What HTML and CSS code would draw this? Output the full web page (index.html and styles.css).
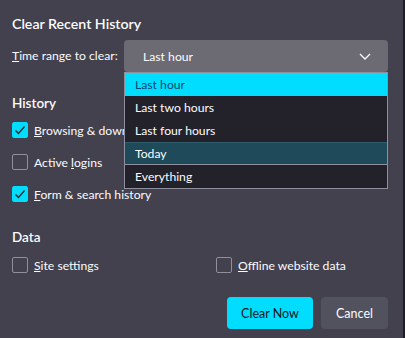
FILE: index.html
```html
<!DOCTYPE html>
<html>
<head>
<meta charset="utf-8">
<link rel="stylesheet" href="styles.css">
</head>
<body>
<div class="window">
  <div class="dialog">
    <h1 class="title">Clear Recent History</h1>
    <div class="range-row">
      <span class="range-label"><u>T</u>ime range to clear:</span>
      <div class="select-wrap">
        <div class="select">
          <span>Last hour</span>
          <svg class="chevron" width="12" height="7" viewBox="0 0 12 7"><polyline points="1,1 6,6 11,1" fill="none" stroke="#fbfbfe" stroke-width="1.3"/></svg>
        </div>
        <ul class="menu">
          <li class="item selected">Last hour</li>
          <li class="item">Last two hours</li>
          <li class="item">Last four hours</li>
          <li class="item hover">Today</li>
          <li class="item">Everything</li>
        </ul>
      </div>
    </div>

    <h2 class="section history-head">History</h2>
    <div class="checks">
      <label class="check"><span class="box checked"><svg width="16" height="16" viewBox="0 0 16 16"><polyline points="3.5,8.5 6.5,11.5 12.5,4.5" fill="none" stroke="#2b2a33" stroke-width="1.5"/></svg></span><span><u>B</u>rowsing &amp; download history</span></label>
      <label class="check"><span class="box"></span><span>Active <u>l</u>ogins</span></label>
      <label class="check"><span class="box checked"><svg width="16" height="16" viewBox="0 0 16 16"><polyline points="3.5,8.5 6.5,11.5 12.5,4.5" fill="none" stroke="#2b2a33" stroke-width="1.5"/></svg></span><span><u>F</u>orm &amp; search history</span></label>
    </div>

    <h2 class="section data-head">Data</h2>
    <div class="data-grid">
      <label class="check"><span class="box"></span><span><u>S</u>ite settings</span></label>
      <label class="check"><span class="box"></span><span><u>O</u>ffline website data</span></label>
    </div>

    <div class="buttons">
      <button class="btn primary">Clear Now</button>
      <button class="btn secondary">Cancel</button>
    </div>
  </div>
  <div class="edge"></div>
</div>
</body>
</html>
```

FILE: styles.css
```css
html, body {
  margin: 0;
  padding: 0;
  background: #42414d;
}
body {
  font-family: "Lato", "Noto Sans", sans-serif;
  color: #fbfbfe;
  font-size: 12.2px;
}
.window {
  display: flex;
  width: 405px;
  height: 338px;
  overflow: hidden;
}
.dialog {
  flex: 1;
  padding: 14px 15px 0 12px;
}
.edge {
  width: 2px;
  background: #1f1e25;
}
.title {
  margin: 0;
  font-size: 14.2px;
  line-height: 20px;
  font-weight: 600;
}
.range-row {
  margin-top: 6px;
  display: flex;
  align-items: center;
  justify-content: space-between;
  height: 32px;
}
.range-label {
  line-height: 18px;
  white-space: nowrap;
}
.select-wrap {
  position: relative;
  width: 264px;
  flex: none;
}
.select {
  height: 32px;
  border-radius: 4px;
  background: #6c6b74;
  display: flex;
  align-items: center;
  justify-content: space-between;
  padding: 0 17px 0 19px;
  box-sizing: border-box;
}
.chevron {
  display: block;
}
.menu {
  position: absolute;
  left: 0;
  top: 32px;
  width: 264px;
  box-sizing: border-box;
  margin: 0;
  padding: 0;
  list-style: none;
  background: #23222b;
  border: 1px solid #8f8f9d;
  z-index: 2;
}
.item {
  height: 23px;
  line-height: 23px;
  padding-left: 10px;
  box-sizing: border-box;
}
.item.selected {
  background: #00ddff;
  color: #0c4a6e;
}
.item.hover {
  background: #1e4a5a;
  border-top: 1px solid #2f5d6c;
  border-bottom: 1px solid #8f8f9d;
  line-height: 21px;
}
.section {
  margin: 0;
  font-size: 13.5px;
  line-height: 20px;
  font-weight: 600;
}
.history-head {
  margin-top: 21px;
}
.checks {
  margin-top: 9px;
  display: flex;
  flex-direction: column;
  gap: 16px;
}
.check {
  display: flex;
  align-items: center;
  gap: 6px;
  height: 16px;
  white-space: nowrap;
}
.box {
  width: 16px;
  height: 16px;
  box-sizing: border-box;
  border: 1px solid #8f8f9d;
  border-radius: 2px;
  flex: none;
}
.box.checked {
  background: #00ddff;
  border-color: #00ddff;
}
.box svg {
  display: block;
  margin: -1px;
}
.data-head {
  margin-top: 25px;
}
.data-grid {
  margin-top: 10px;
  display: grid;
  grid-template-columns: 204px 1fr;
}
.buttons {
  margin-top: 24px;
  display: flex;
  justify-content: flex-end;
  gap: 8px;
}
.btn {
  font-family: inherit;
  font-size: 12.5px;
  height: 32px;
  border: none;
  border-radius: 4px;
  cursor: default;
}
.primary {
  background: #00ddff;
  color: #15141a;
  width: 86px;
}
.secondary {
  background: #52515e;
  color: #fbfbfe;
  width: 67px;
}
```
